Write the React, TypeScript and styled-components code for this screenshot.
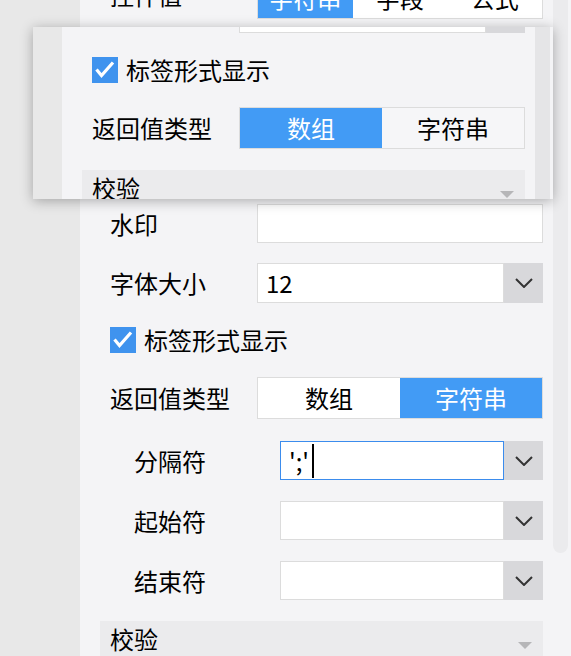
import styled, { createGlobalStyle } from "styled-components";

const GlobalStyle = createGlobalStyle`
  html, body {
    margin: 0;
    padding: 0;
  }
  body {
    width: 571px;
    height: 656px;
    overflow: hidden;
    background: #e8e8e8;
    color: #000;
    font-family: "Noto Sans CJK SC", "Noto Sans", sans-serif;
  }
`;

const Page = styled.div`
  position: relative;
  display: flex;
  height: 656px;
  overflow: hidden;
`;

const Gutter = styled.div<{ $w: number }>`
  flex: 0 0 ${({ $w }) => $w}px;
  background: #e8e8e8;
`;

const PanelFrame = styled.div`
  flex: 0 0 491px;
  display: flex;
  background: #f4f4f6;
  overflow: hidden;
`;

const Content = styled.div<{ $offset: number }>`
  flex: 1;
  min-width: 0;
  display: flex;
  flex-direction: column;
  gap: 20px;
  padding: 0 9px 0 30px;
  margin-top: ${({ $offset }) => $offset}px;
`;

const ScrollCol = styled.div`
  flex: 0 0 19px;
  box-sizing: border-box;
  padding: 0 3px 0 1px;
`;

const Thumb = styled.div<{ $top: number; $h: number; $color: string }>`
  margin-top: ${({ $top }) => $top}px;
  height: ${({ $h }) => $h}px;
  background: ${({ $color }) => $color};
  border-radius: 8px;
`;

const Row = styled.div<{ $h: number; $indent?: number }>`
  display: flex;
  align-items: center;
  flex: 0 0 ${({ $h }) => $h}px;
  height: ${({ $h }) => $h}px;
  padding-left: ${({ $indent }) => $indent ?? 0}px;
`;

const Label = styled.div<{ $w: number; $lift?: number }>`
  flex: 0 0 ${({ $w }) => $w}px;
  margin-top: ${({ $lift }) => -($lift ?? 0)}px;
  font-size: 24px;
  line-height: 1;
  white-space: nowrap;
`;

const Field = styled.div<{ $focused?: boolean }>`
  flex: 1;
  box-sizing: border-box;
  height: 100%;
  display: flex;
  align-items: center;
  padding: 0 8px;
  background: #fff;
  border: 1px solid ${({ $focused }) => ($focused ? "#3b8ced" : "#dcdcdc")};
  font-size: 24px;
  line-height: 1;
`;

const SelectBox = styled.div`
  flex: 1;
  height: 100%;
  display: flex;
`;

const DropButton = styled.div`
  flex: 0 0 39px;
  display: flex;
  align-items: center;
  justify-content: center;
  background: #d8d8db;
`;

const Caret = styled.span`
  width: 2px;
  height: 34px;
  margin-left: 3px;
  background: #000;
`;

const Segmented = styled.div`
  flex: 1;
  box-sizing: border-box;
  height: 100%;
  display: flex;
  border: 1px solid #dcdcdc;
`;

const Segment = styled.div<{ $active: boolean; $idle: string }>`
  flex: 1;
  display: flex;
  align-items: center;
  justify-content: center;
  font-size: 24px;
  line-height: 1;
  background: ${({ $active, $idle }) => ($active ? "#429bf5" : $idle)};
  color: ${({ $active }) => ($active ? "#fff" : "#000")};
`;

const CheckBox = styled.div`
  flex: 0 0 26px;
  height: 26px;
  display: flex;
  align-items: center;
  justify-content: center;
  background: #3f93ee;
`;

const CheckText = styled.span`
  margin-left: 8px;
  font-size: 24px;
  line-height: 1;
`;

const TextArea = styled.div`
  flex: 1;
  height: 100%;
  background: #fff;
  border: 1px solid #dcdcdc;
`;

const SubGroup = styled.div`
  display: flex;
  flex-direction: column;
  gap: 21px;
  padding-top: 2px;
`;

const SectionBar = styled.div`
  flex: 0 0 40px;
  display: flex;
  justify-content: space-between;
  margin: 1px 0 0 -10px;
  padding: 0 11px 0 10px;
  background: #ebebed;
`;

const SectionTitle = styled.span`
  padding-top: 6px;
  font-size: 24px;
  line-height: 1;
`;

const Triangle = styled.span`
  width: 0;
  height: 0;
  margin-top: 21px;
  border-left: 7.5px solid transparent;
  border-right: 7.5px solid transparent;
  border-top: 7px solid #b6b6b8;
`;

const Ghost = styled.div`
  position: absolute;
  left: 33px;
  top: 27px;
  width: 520px;
  height: 172px;
  display: flex;
  overflow: hidden;
  box-shadow: 0 2px 12px rgba(0, 0, 0, 0.3);
`;

const Chevron = () => (
  <svg width="18" height="10" viewBox="0 0 18 10">
    <path d="M1 1 L9 9 L17 1" fill="none" stroke="#333" strokeWidth="2" />
  </svg>
);

const Tick = () => (
  <svg width="26" height="26" viewBox="0 0 26 26">
    <path
      d="M4.5 12.5 L9.5 18.5 L21 5.5"
      fill="none"
      stroke="#fff"
      strokeWidth="3.2"
    />
  </svg>
);

type Choice = { options: string[]; active: number; idle?: string };

const Switch = ({ options, active, idle = "#fff" }: Choice) => (
  <Segmented>
    {options.map((o, i) => (
      <Segment key={o} $active={i === active} $idle={idle}>
        {o}
      </Segment>
    ))}
  </Segmented>
);

const Select = ({
  value,
  focused,
}: {
  value?: string;
  focused?: boolean;
}) => (
  <SelectBox>
    <Field $focused={focused}>
      {value}
      {focused && <Caret />}
    </Field>
    <DropButton>
      <Chevron />
    </DropButton>
  </SelectBox>
);

const ShowAsTags = () => (
  <Row $h={34}>
    <CheckBox>
      <Tick />
    </CheckBox>
    <CheckText>标签形式显示</CheckText>
  </Row>
);

const Validation = () => (
  <SectionBar>
    <SectionTitle>校验</SectionTitle>
    <Triangle />
  </SectionBar>
);

export default function App() {
  return (
    <Page>
      <GlobalStyle />
      <Gutter $w={80} />
      <PanelFrame>
        <Content $offset={-23}>
          <Row $h={42}>
            <Label $w={147} $lift={6}>
              控件值
            </Label>
            <Switch options={["字符串", "字段", "公式"]} active={0} />
          </Row>
          {/* value editor, hidden under the dragged ghost */}
          <Row $h={145}>
            <TextArea />
          </Row>
          <Row $h={39}>
            <Label $w={147}>水印</Label>
            <Field />
          </Row>
          <Row $h={40}>
            <Label $w={147}>字体大小</Label>
            <Select value="12" />
          </Row>
          <ShowAsTags />
          <Row $h={42}>
            <Label $w={147}>返回值类型</Label>
            <Switch options={["数组", "字符串"]} active={1} />
          </Row>
          <SubGroup>
            <Row $h={39} $indent={24}>
              <Label $w={146}>分隔符</Label>
              <Select value="';'" focused />
            </Row>
            <Row $h={39} $indent={24}>
              <Label $w={146}>起始符</Label>
              <Select />
            </Row>
            <Row $h={39} $indent={24}>
              <Label $w={146}>结束符</Label>
              <Select />
            </Row>
          </SubGroup>
          <Validation />
        </Content>
        <ScrollCol>
          <Thumb $top={-10} $h={563} $color="#ebebed" />
        </ScrollCol>
      </PanelFrame>

      <Ghost>
        <Gutter $w={29} />
        <PanelFrame>
          <Content $offset={-34}>
            <Row $h={40}>
              <Label $w={147} />
              <Select />
            </Row>
            <ShowAsTags />
            <Row $h={42}>
              <Label $w={147}>返回值类型</Label>
              <Switch options={["数组", "字符串"]} active={0} idle="#f6f6f8" />
            </Row>
            <Validation />
          </Content>
          <ScrollCol>
            <Thumb $top={-10} $h={400} $color="#e5e5e7" />
          </ScrollCol>
        </PanelFrame>
      </Ghost>
    </Page>
  );
}
